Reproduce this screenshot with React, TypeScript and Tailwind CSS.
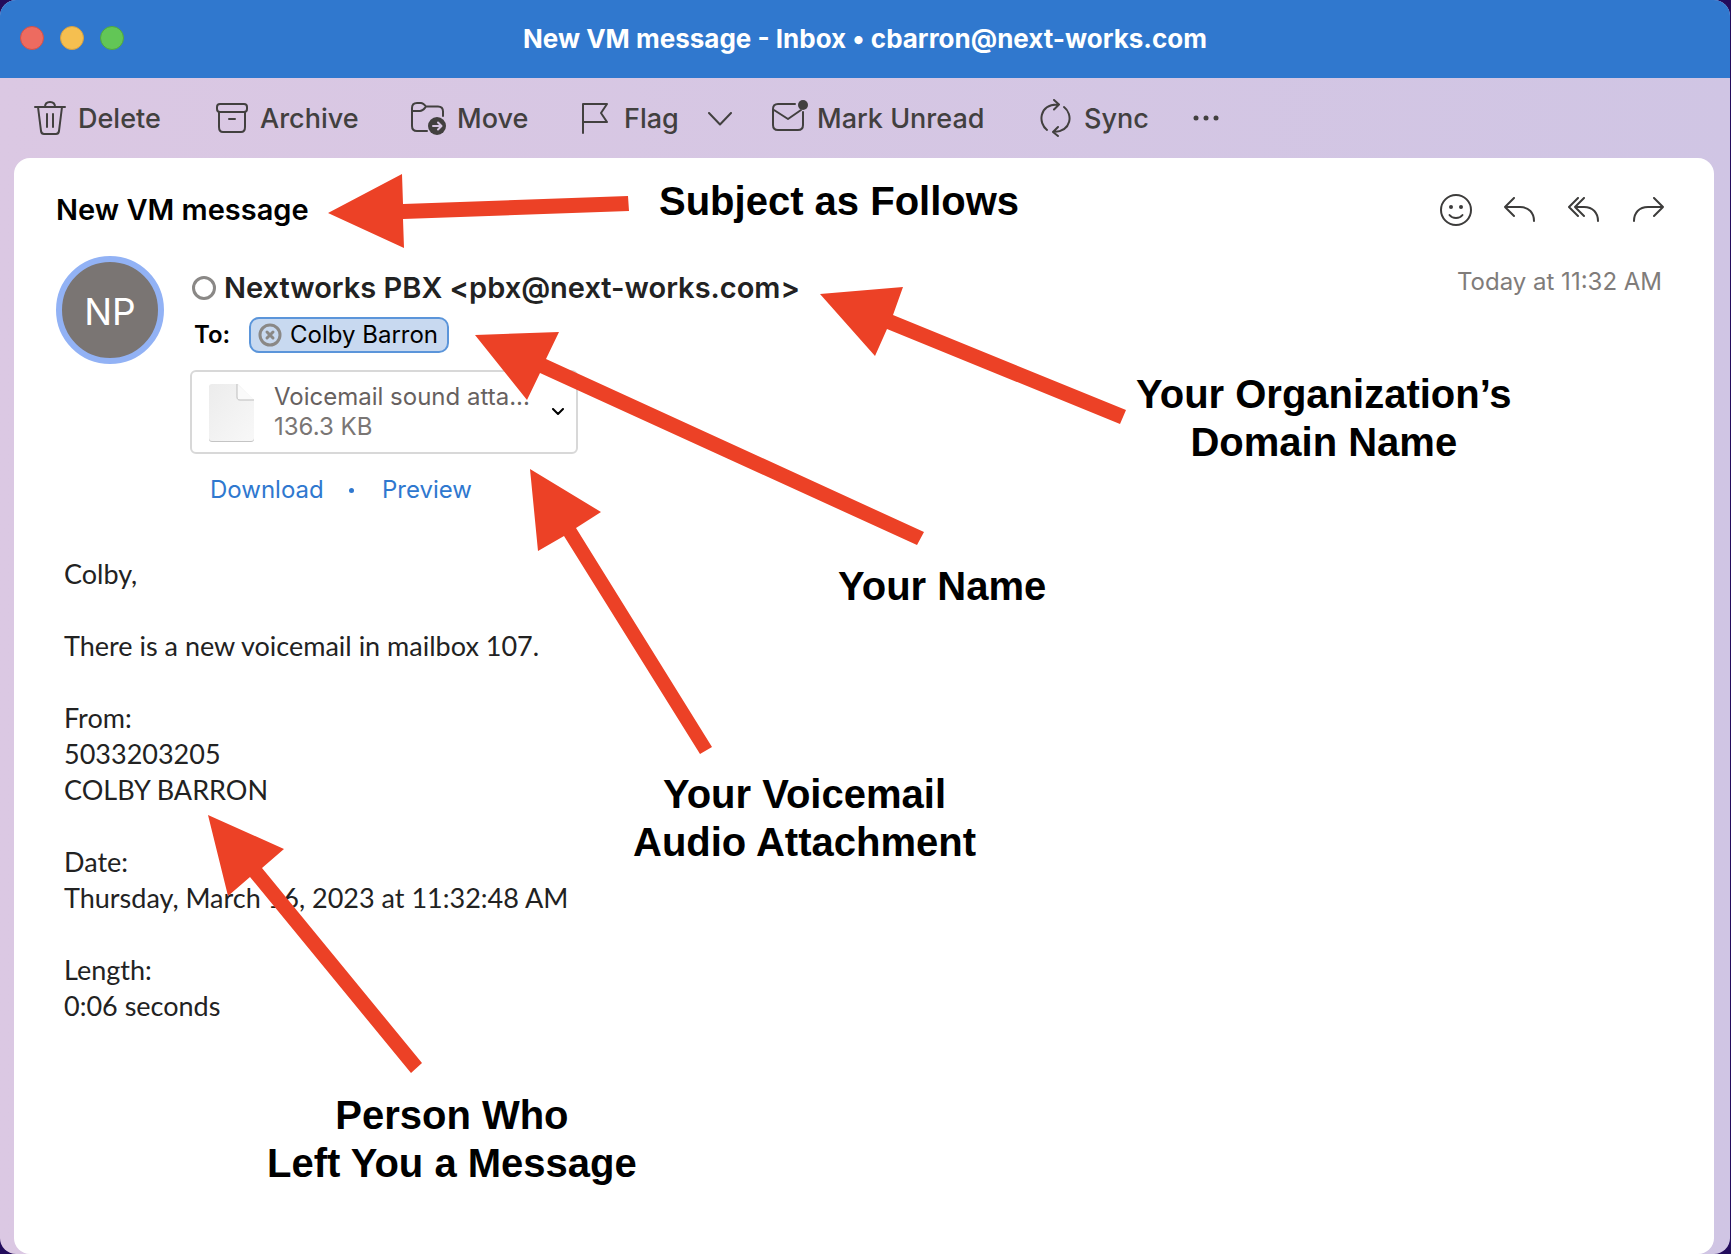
import React from 'react';

interface Arrow {
  id: string;
  points: string;
}

interface ToolbarButtonProps {
  label: string;
  className: string;
  children: React.ReactNode;
}

const arrows: Arrow[] = [
  { id: 'subject', points: '328,213 402,174 403,204 628,196 629,211 403,219 404,248' },
  { id: 'domain', points: '820,294 903,287 893,315 1126,410 1120,424 887,329 875,356' },
  { id: 'name', points: '475,335 559,332 546,359 924,532 917,545 540,373 527,400' },
  { id: 'attachment', points: '530,469 601,512 576,528 712,747 700,754 564,536 538,551' },
  { id: 'caller', points: '208,815 284,849 262,868 422,1063 411,1073 250,877 228,896' },
];

const messageLines = [
  'Colby,',
  '',
  'There is a new voicemail in mailbox 107.',
  '',
  'From:',
  '5033203205',
  'COLBY BARRON',
  '',
  'Date:',
  'Thursday, March 16, 2023 at 11:32:48 AM',
  '',
  'Length:',
  '0:06 seconds',
];

const iconProps = {
  fill: 'none',
  stroke: 'currentColor',
  strokeWidth: 2,
  strokeLinecap: 'round' as const,
  strokeLinejoin: 'round' as const,
  'aria-hidden': true,
};

const ToolbarButton: React.FC<ToolbarButtonProps> = ({ label, className, children }) => (
  <button type="button" className={`flex items-center whitespace-nowrap ${className}`}>
    {children}
    <span className="pt-0.5">{label}</span>
  </button>
);

const TitleBar = () => (
  <header className="grid h-[78px] grid-cols-[1fr_auto_1fr] items-center bg-[#3078ce] px-5 pb-0.5">
    <div className="flex gap-4">
      <button type="button" aria-label="Close" className="size-6 rounded-full border border-[#d35047] bg-[#ed6b60]" />
      <button type="button" aria-label="Minimize" className="size-6 rounded-full border border-[#d8a040] bg-[#f5bf50]" />
      <button type="button" aria-label="Zoom" className="size-6 rounded-full border border-[#4fa73e] bg-[#62c656]" />
    </div>
    <h1 className="text-[26px] font-bold whitespace-nowrap text-white">
      New VM message - Inbox • cbarron@next-works.com
    </h1>
  </header>
);

const Toolbar = () => (
  <nav className="flex h-20 items-center pl-[34px] text-[27px] font-medium text-[#42403f]">
    <ToolbarButton label="Delete" className="w-[182px] gap-3">
      <svg {...iconProps} width="32" height="36" viewBox="0 0 32 36">
        <path d="M1 7h30M11 7c0-3 2-5 5-5s5 2 5 5M4 7l3 24c.3 2 1.500 3 3 3h12c1.500 0 2.700-1 3-3l3-24M13 14v13M19 14v13" />
      </svg>
    </ToolbarButton>
    <ToolbarButton label="Archive" className="w-[195px] gap-3">
      <svg {...iconProps} width="32" height="30" viewBox="0 0 32 30">
        <rect x="1" y="1" width="30" height="8" rx="3" />
        <path d="M3 9v15c0 3 1.500 5 4 5h18c2.500 0 4-2 4-5V9M13 16h6" />
      </svg>
    </ToolbarButton>
    <ToolbarButton label="Move" className="w-[171px] gap-[10px]">
      <svg {...iconProps} width="36" height="34" viewBox="0 0 36 34">
        <path d="M16 30H6c-3 0-5-2-5-5V7c0-3 2-5 5-5h4c2 0 3 1 5 3.500h12c3 0 5 2 5 5V15M1 10h8c3 0 4-2 6-4.500" />
        <circle cx="26" cy="25" r="9" fill="currentColor" stroke="none" />
        <path d="M22 25h8M27 21.500l3.500 3.500-3.500 3.500" stroke="#d6c6e2" />
      </svg>
    </ToolbarButton>
    <ToolbarButton label="Flag" className="w-[126px] gap-4">
      <svg {...iconProps} width="26" height="32" viewBox="0 0 26 32">
        <path d="M1 31V2h24l-6 9 6 9H1" />
      </svg>
    </ToolbarButton>
    <button type="button" aria-label="Flag options" className="w-16 pt-0.5">
      <svg {...iconProps} width="24" height="14" viewBox="0 0 24 14">
        <path d="M1 1l11 11.500L23 1" />
      </svg>
    </button>
    <ToolbarButton label="Mark Unread" className="w-[268px] gap-2">
      <svg {...iconProps} width="37" height="36" viewBox="0 0 37 36">
        <path d="M23 4H6C3 4 1 6 1 9v16c0 3 2 5 5 5h20c3 0 5-2 5-5V12M2 10l14 9 13-9" />
        <circle cx="31" cy="5" r="5" fill="currentColor" stroke="none" />
      </svg>
    </ToolbarButton>
    <ToolbarButton label="Sync" className="w-[153px] gap-[13px]">
      <svg {...iconProps} width="31" height="38" viewBox="0 0 31 38">
        <path d="M7 31C-2 24-1 6 17 5.500M14 1l5 4.500-5 5M24 8c9 7 8 24-10 25M18 28l-5 5 5 4" />
      </svg>
    </ToolbarButton>
    <button type="button" aria-label="More items">
      <svg width="26" height="6" viewBox="0 0 26 6" fill="currentColor" aria-hidden>
        <circle cx="3" cy="3" r="2.500" />
        <circle cx="13" cy="3" r="2.500" />
        <circle cx="23" cy="3" r="2.500" />
      </svg>
    </button>
  </nav>
);

const MessageActions = () => (
  <div className="flex items-center gap-8 text-[#3d3c3b]">
    <button type="button" aria-label="React">
      <svg {...iconProps} width="32" height="32" viewBox="0 0 32 32">
        <circle cx="16" cy="16" r="15" />
        <circle cx="11" cy="13" r="2" fill="currentColor" stroke="none" />
        <circle cx="21" cy="13" r="2" fill="currentColor" stroke="none" />
        <path d="M9.500 21c3 4 10 4 13 0" />
      </svg>
    </button>
    <button type="button" aria-label="Reply">
      <svg {...iconProps} width="32" height="26" viewBox="0 0 32 26">
        <path d="M10 1L1 10l9 9M1 10h15c9 0 14 6 14 14" />
      </svg>
    </button>
    <button type="button" aria-label="Reply all">
      <svg {...iconProps} width="32" height="26" viewBox="0 0 32 26">
        <path d="M10 1L1 10l9 9M16 1l-9 9 9 9M7 10h9c9 0 14 6 14 14" />
      </svg>
    </button>
    <button type="button" aria-label="Forward">
      <svg {...iconProps} width="32" height="26" viewBox="0 0 32 26">
        <path d="M22 1l9 9-9 9M31 10H16C7 10 2 16 2 24" />
      </svg>
    </button>
  </div>
);

const Attachment = () => (
  <div className="mt-[17px]">
    <div className="flex h-[84px] w-[388px] items-center rounded-md border-2 border-[#d8d8d8] pr-3 pl-4 text-[24px] leading-[30px]">
      <svg width="48" height="60" viewBox="0 0 48 60" aria-hidden>
        <defs>
          <linearGradient id="page" x1="0" y1="0" x2="1" y2="1">
            <stop offset="0" stopColor="#ececec" />
            <stop offset="1" stopColor="#f8f8f8" />
          </linearGradient>
        </defs>
        <path d="M4 3h26l16 16v38c0 2-1 3-3 3H4c-2 0-3-1-3-3V6c0-2 1-3 3-3z" fill="#c4c4c4" />
        <path d="M4 2h26l16 16v38c0 2-1 3-3 3H4c-2 0-3-1-3-3V5c0-2 1-3 3-3z" fill="url(#page)" />
        <path d="M29 2v13c0 2 1 3 3 3h14z" fill="#fafafa" />
        <path d="M29 2v13c0 2 1 3 3 3h14" fill="none" stroke="#bdbdbd" />
      </svg>
      <div className="ml-[18px] flex-1 whitespace-nowrap">
        <p className="text-[#67615f]">Voicemail sound atta...</p>
        <p className="text-[#7a7674]">136.3 KB</p>
      </div>
      <button type="button" aria-label="Attachment options" className="text-black">
        <svg {...iconProps} width="12" height="8" viewBox="0 0 12 8">
          <path d="M1 1l5 5 5-5" />
        </svg>
      </button>
    </div>
    <div className="mt-5 flex items-center pl-5 text-[24px] leading-8 text-[#2f78cf]">
      <a href="#download" className="w-[139px]">Download</a>
      <span className="mr-7 size-[5px] rounded-full bg-[#2f78cf]" />
      <a href="#preview">Preview</a>
    </div>
  </div>
);

const MessageHeader = () => (
  <section className="pt-8 pr-[50px] pl-[42px]">
    <div className="flex items-center justify-between">
      <h2 className="text-[29px] leading-10 font-semibold text-black">New VM message</h2>
      <MessageActions />
    </div>
    <div className="mt-[26px] flex items-start">
      <div className="flex size-[108px] items-center justify-center rounded-full border-[6px] border-[#92b2f5] bg-[#7a7573] pt-1 text-[37px] text-white">
        NP
      </div>
      <div className="ml-[26px] flex-1 pt-3">
        <div className="flex items-center gap-2">
          <button type="button" aria-label="Mark as read" className="ml-0.5 size-6 rounded-full border-3 border-[#8a8886]" />
          <p className="text-[29px] leading-10 font-semibold text-[#222]">
            Nextworks PBX &lt;pbx@next-works.com&gt;
          </p>
        </div>
        <div className="mt-[9px] flex items-center text-[24px] text-black">
          <span className="w-[59px] pl-1 font-semibold">To:</span>
          <button type="button" className="flex h-9 items-center gap-2 rounded-[10px] border-2 border-[#5b95da] bg-[#c8d9f0] pr-[9px] pl-[7px]">
            <svg {...iconProps} width="24" height="24" viewBox="0 0 24 24" className="text-[#8a8886]" strokeWidth={3}>
              <circle cx="12" cy="12" r="10" />
              <path d="M9 9l6 6M15 9l-6 6" />
            </svg>
            Colby Barron
          </button>
        </div>
        <Attachment />
      </div>
      <time className="pt-[10px] pr-0.5 text-[24px] leading-8 text-[#807c7a]">Today at 11:32 AM</time>
    </div>
  </section>
);

// Callouts drawn over the mail window
const Annotations = () => (
  <div className="pointer-events-none absolute inset-0 overflow-hidden font-['Liberation_Sans',Arial,sans-serif] text-[40px] leading-[48px] font-bold whitespace-nowrap text-black">
    <svg className="absolute top-0 left-0" width="1731" height="1254" viewBox="0 0 1731 1254" aria-hidden>
      {arrows.map((arrow) => (
        <polygon key={arrow.id} points={arrow.points} fill="#ec4126" />
      ))}
    </svg>
    <p className="absolute top-[177px] left-[659px]">Subject as Follows</p>
    <p className="absolute top-[370px] left-[1136px] text-center">
      Your Organization’s
      <br />
      Domain Name
    </p>
    <p className="absolute top-[562px] left-[838px]">Your Name</p>
    <p className="absolute top-[770px] left-[633px] text-center">
      Your Voicemail
      <br />
      Audio Attachment
    </p>
    <p className="absolute top-[1091px] left-[267px] text-center">
      Person Who
      <br />
      Left You a Message
    </p>
  </div>
);

export default function App() {
  return (
    <div className="relative min-h-screen bg-[#230c5c] pr-px font-['Inter',sans-serif]">
      <div className="flex min-h-screen flex-col overflow-hidden rounded-2xl bg-linear-to-r from-[#dbc8e3] to-[#d0c5e4]">
        <TitleBar />
        <Toolbar />
        <main className="mr-4 ml-3.5 flex-1 rounded-2xl bg-white">
          <MessageHeader />
          <section className="mt-[50px] pl-[50px] font-['Lato',sans-serif] text-[27px] leading-9 text-[#222]">
            {messageLines.map((line, i) => (
              <p key={i} className="min-h-9">{line}</p>
            ))}
          </section>
        </main>
      </div>
      <Annotations />
    </div>
  );
}
